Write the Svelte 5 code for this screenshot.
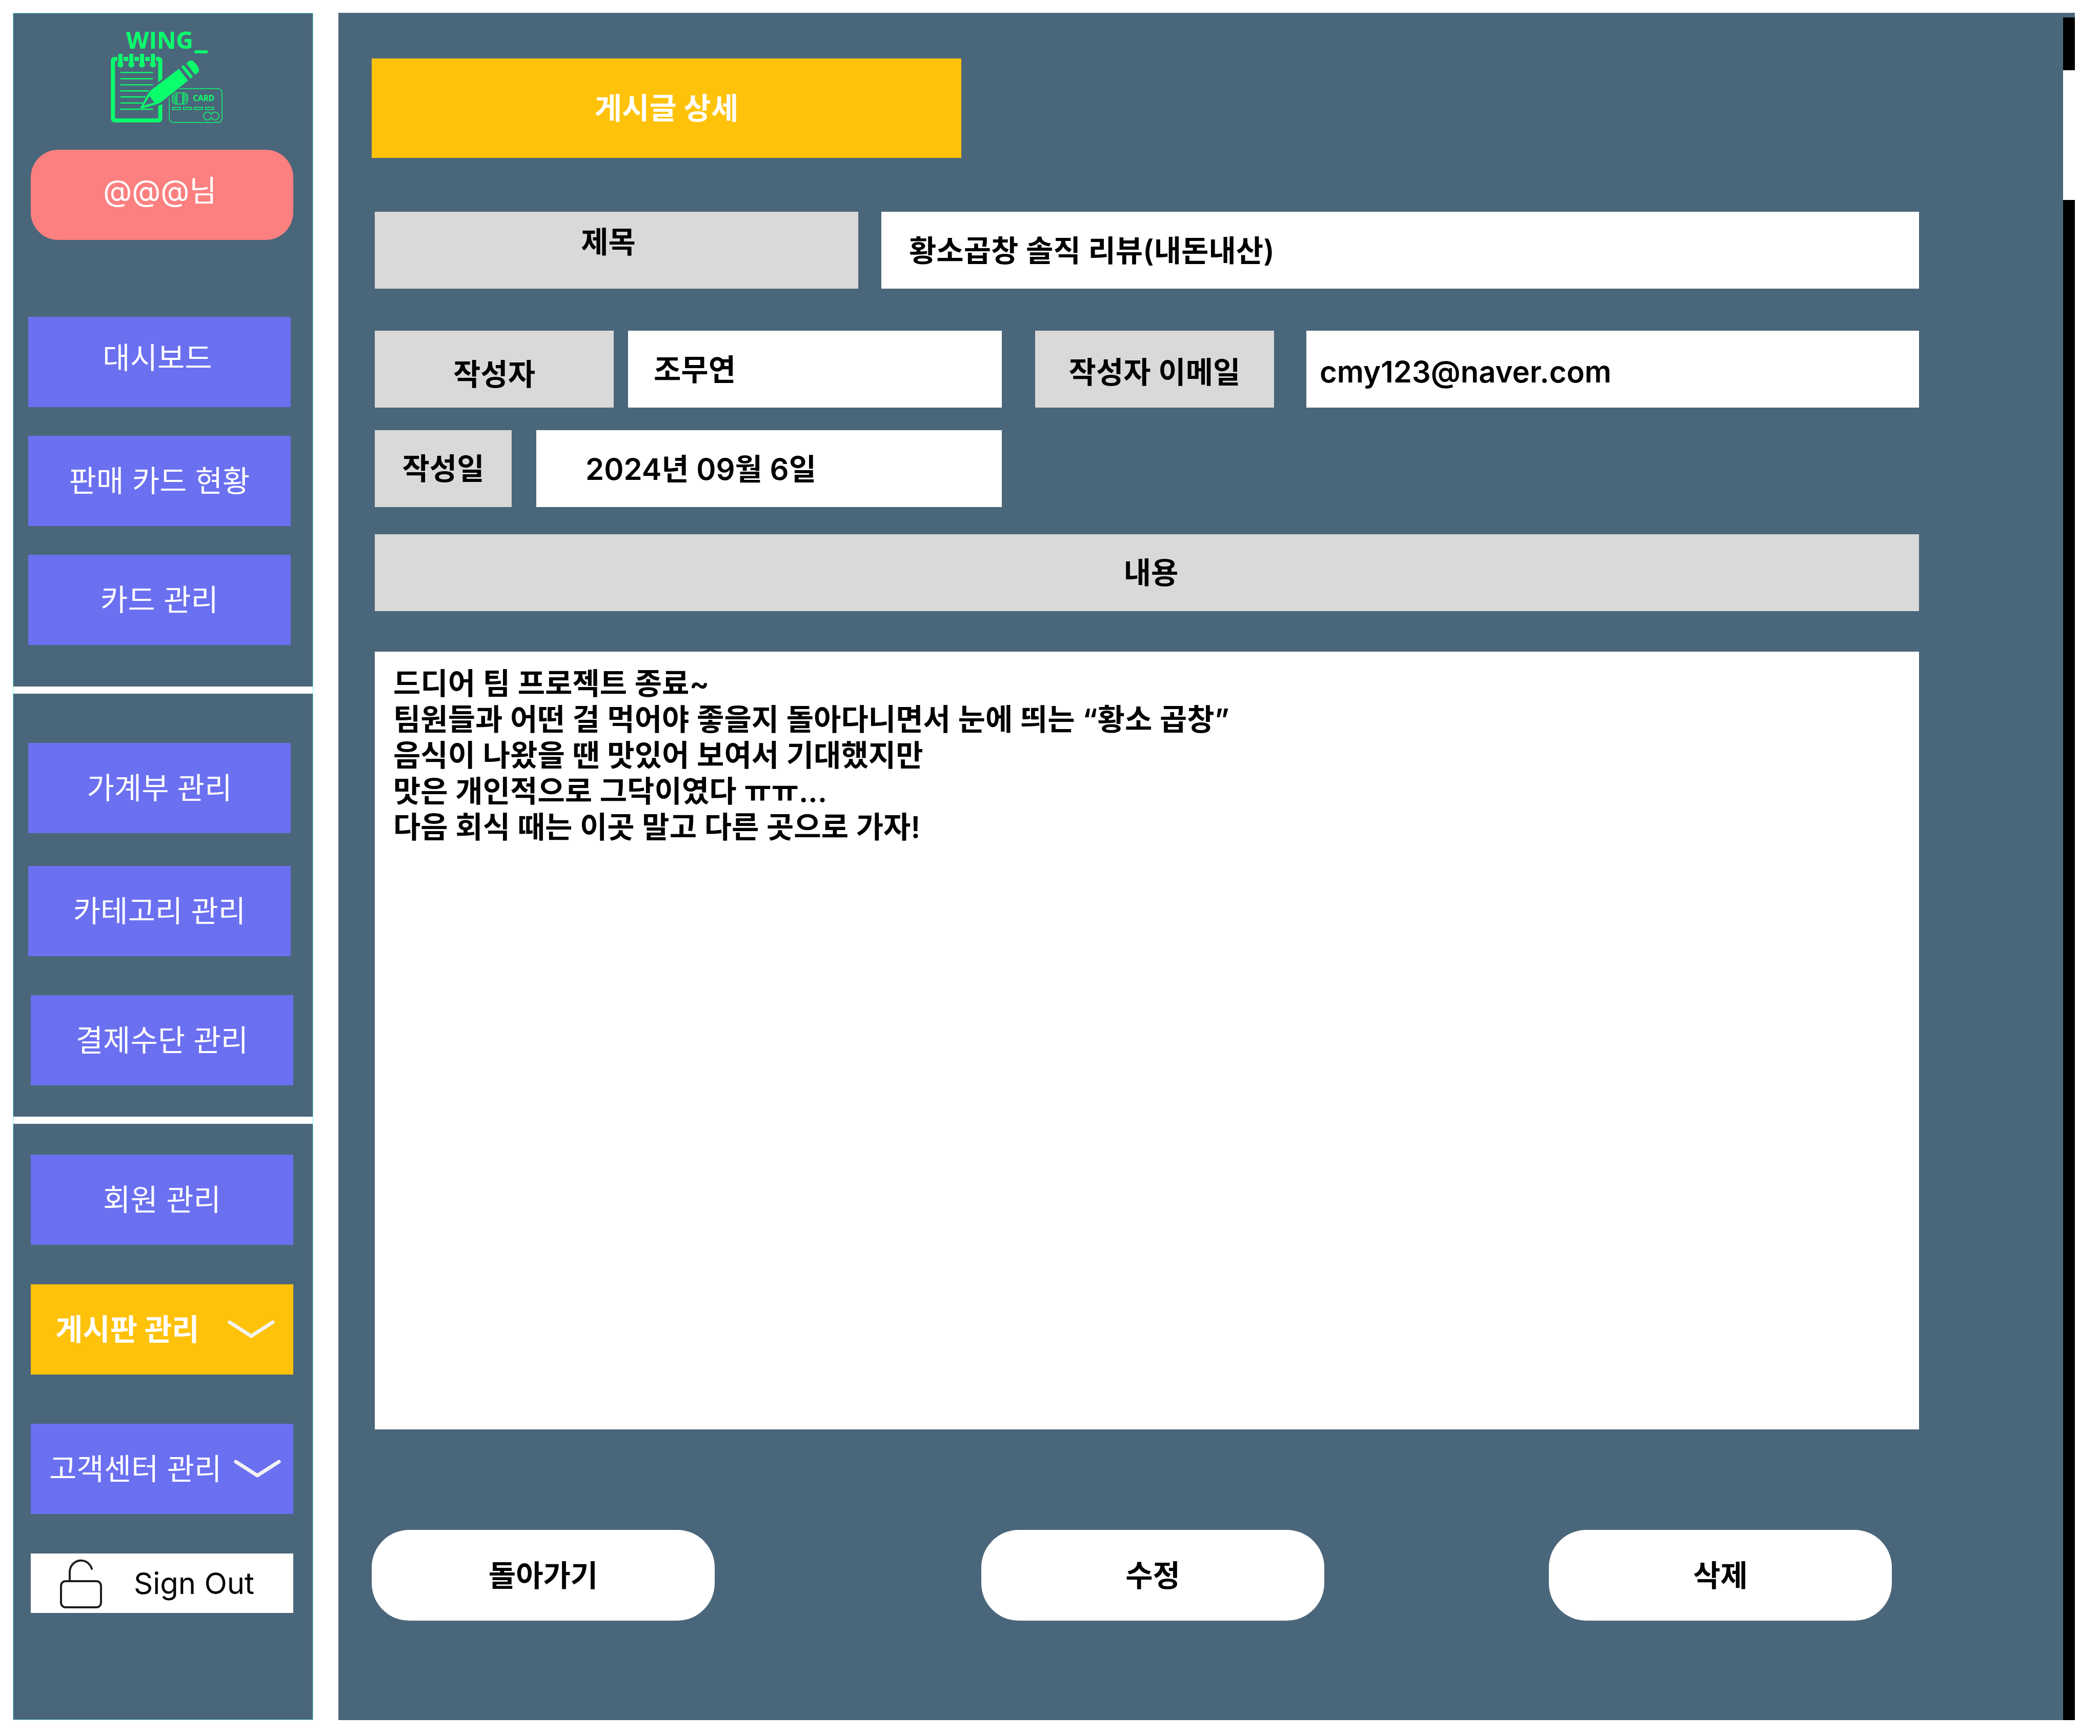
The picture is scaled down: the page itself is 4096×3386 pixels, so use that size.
<script>
  const post = {
    title: '황소곱창 솔직 리뷰(내돈내산)',
    author: '조무연',
    email: 'cmy123@naver.com',
    date: '2024년 09월 6일',
    body: [
      '드디어 팀 프로젝트 종료~',
      '팀원들과 어떤 걸 먹어야 좋을지 돌아다니면서 눈에 띄는 “황소 곱창”',
      '음식이 나왔을 땐 맛있어 보여서 기대했지만',
      '맛은 개인적으로 그닥이였다 ㅠㅠ...',
      '다음 회식 때는 이곳 말고 다른 곳으로 가자!'
    ].join('\n')
  };
  const noteLines = [315, 355, 394, 433, 472, 511, 551];
  const rings = [145, 215, 284, 354];
  const dashes = [479, 550, 621, 692];
</script>

{#snippet chevron()}
  <svg class="chevron" viewBox="0 0 92 36" aria-hidden="true">
    <path d="M4 4 46 31 88 4" />
  </svg>
{/snippet}

<div class="page">
  <aside class="sidebar">
    <section class="group first">
      <svg class="logo" viewBox="80 50 724 590" role="img" aria-label="WING_ CARD">
        <text class="wing" x="182" y="162">WING</text>
        <text class="cursor" x="625" y="158">_</text>
        <rect class="pad" x="97" y="228" width="304" height="395" rx="10" />
        {#each rings as x}
          <rect class="gap" x={x - 20} y="205" width="40" height="50" />
          <rect class="solid" x={x - 13} y="195" width="26" height="65" rx="2" />
          <circle class="solid" cx={x} cy="264" r="19" />
        {/each}
        {#each noteLines as y}
          <path class="rule" d="M144 {y}H354" />
        {/each}
        <rect class="card" x="459" y="418" width="339" height="218" rx="26" />
        <rect class="chip" x="479" y="446" width="98" height="72" rx="22" />
        <path class="chip" d="M508 446V518M545 446V518M479 460H514M479 472H508M479 485H500M479 498H504M552 446V518M552 460H575M552 472H577M552 485H577M552 498H575M500 472V518" />
        <text class="card-name" x="612" y="498">CARD</text>
        {#each dashes as x}
          <rect class="dash" {x} y="539" width="52" height="14" />
        {/each}
        <path class="dash" d="M729 586A25.500 25.500 0 1 0 729 603A25.500 25.500 0 1 0 729 586M729 586V580M729 603V609" />
        <path class="gap" d="M388 377 540 262 600 350 416 516 388 530Z" />
        <path class="gap" d="M268 551 326 432 400 384 520 290 580 366 400 518 372 524Z" />
        <path class="solid" d="M521 291 580 367 404 507Q396 513 386 516L278 548Q272 550 273 543L328 442Q332 435 340 430Z" />
        <path class="gap" d="M332 466 363 508 294 528Z" />
        <path class="solid" d="M536 279 551 267 611 341 596 355Z" />
        <path class="solid" d="M568 257 584 244Q600 232 616 245Q642 270 650 293Q653 306 643 316L626 330Z" />
      </svg>
      <button class="tile profile raised" type="button">@@@님</button>
      <nav class="links">
        <a class="tile raised" href="#dashboard">대시보드</a>
        <a class="tile" href="#card-sales">판매 카드 현황</a>
        <a class="tile" href="#cards">카드 관리</a>
      </nav>
    </section>

    <nav class="group second">
      <a class="tile" href="#ledger">가계부 관리</a>
      <a class="tile" href="#categories">카테고리 관리</a>
      <a class="tile shifted" href="#payments">결제수단 관리</a>
    </nav>

    <nav class="group third">
      <a class="tile" href="#members">회원 관리</a>
      <button class="tile menu active" type="button">게시판 관리 {@render chevron()}</button>
      <button class="tile menu support" type="button">고객센터 관리 {@render chevron()}</button>
      <button class="sign-out" type="button">
        <svg class="lock" viewBox="0 0 82 98" aria-hidden="true">
          <rect x="2" y="45" width="78" height="51" rx="9" />
          <path d="M19 45V26A22 23 0 0 1 62 21" />
        </svg>
        Sign Out
      </button>
    </nav>
  </aside>

  <main class="main">
    <div class="content">
      <h1>게시글 상세</h1>

      <form class="post">
        <div class="field title">
          <label for="title">제목</label>
          <input id="title" readonly value={post.title} />
        </div>
        <div class="columns">
          <div class="field author">
            <label for="author">작성자</label>
            <input id="author" readonly value={post.author} />
          </div>
          <div class="field email">
            <label for="email">작성자 이메일</label>
            <input id="email" type="email" readonly value={post.email} />
          </div>
          <div class="field date">
            <label for="date">작성일</label>
            <input id="date" readonly value={post.date} />
          </div>
        </div>
        <label class="body-label" for="body">내용</label>
        <textarea id="body" readonly value={post.body}></textarea>
      </form>

      <div class="actions">
        <button type="button">돌아가기</button>
        <button type="button">수정</button>
        <button type="button">삭제</button>
      </div>
    </div>
    <div class="scroll-track"><div class="scroll-thumb"></div></div>
  </main>
</div>

<style>
  :global(body) {
    background: #fff;
  }

  .page,
  .page * {
    box-sizing: border-box;
  }

  .page {
    display: flex;
    gap: 49px;
    min-height: 100vh;
    padding: 25px 49px 31px 25px;
    font: 400 58px/70px Inter, 'Noto Sans CJK KR', sans-serif;
    color: #000;
  }

  button,
  input,
  textarea {
    margin: 0;
    border: 0;
    border-radius: 0;
    font: inherit;
    color: inherit;
  }

  a {
    text-decoration: none;
  }

  /* Sidebar */
  .sidebar {
    display: flex;
    flex: none;
    flex-direction: column;
    width: 586px;
    background: #4a667a;
    border: 1px solid #7ff0e0;
  }

  .group {
    display: flex;
    flex-direction: column;
    align-items: flex-start;
    padding: 0 38px 0 29px;
  }

  .first {
    padding-top: 35px;
    padding-bottom: 81px;
  }

  .second {
    padding-top: 96px;
    padding-bottom: 61px;
    gap: 64px;
    border: solid #fff;
    border-width: 14px 0;
  }

  .second .shifted {
    align-self: flex-end;
    margin-top: 12px;
  }

  .third {
    align-items: flex-end;
    padding-top: 60px;
    gap: 77px;
  }

  .logo {
    width: 220px;
    height: 179px;
    margin: 0 0 52px 160px;
    overflow: visible;
  }

  .links {
    display: flex;
    flex-direction: column;
    gap: 56px;
    margin-top: 150px;
  }

  .tile {
    display: flex;
    align-items: center;
    justify-content: center;
    width: 512px;
    height: 176px;
    background: #6b70f0;
    color: #fff;
  }

  .raised {
    padding: 0 8px 16px 0;
  }

  .profile {
    align-self: flex-end;
    border-radius: 54px;
    background: #fc8080;
  }

  .menu {
    justify-content: space-between;
    padding: 0 24px 0 36px;
  }

  .active {
    padding: 0 36px 0 48px;
    background: #ffc20a;
    font-weight: 700;
  }

  .support {
    margin-top: 19px;
  }

  .chevron {
    width: 92px;
    height: 36px;
    fill: none;
    stroke: #f3f3f3;
    stroke-width: 7;
    stroke-linecap: round;
    stroke-linejoin: round;
  }

  .sign-out {
    display: flex;
    align-items: center;
    gap: 62px;
    width: 512px;
    height: 116px;
    padding: 0 0 0 57px;
    background: #fff;
  }

  .lock {
    width: 82px;
    height: 98px;
    fill: none;
    stroke: #1e1e1e;
    stroke-width: 4;
    stroke-linecap: round;
  }

  /* Logo artwork */
  .wing,
  .cursor,
  .card-name {
    font: 700 152px 'Open Sans', sans-serif;
    fill: #0aff6c;
  }

  .cursor {
    font-size: 190px;
    stroke: #0aff6c;
    stroke-width: 6;
  }

  .card-name {
    font-size: 50px;
  }

  .solid {
    fill: #0aff6c;
  }

  .gap {
    fill: #4a667a;
  }

  .pad,
  .rule,
  .card,
  .chip,
  .dash {
    fill: none;
    stroke: #0aff6c;
  }

  .pad {
    stroke-width: 26;
  }

  .rule {
    stroke-width: 8;
  }

  .card,
  .chip,
  .dash {
    stroke-width: 5;
  }

  /* Post detail */
  .main {
    display: flex;
    flex: 1;
    min-width: 0;
    background: #4a667a;
  }

  .content {
    display: flex;
    flex: 1;
    flex-direction: column;
    min-width: 0;
    padding: 89px 281px 194px 65px;
    font-weight: 600;
  }

  h1 {
    display: flex;
    align-items: center;
    justify-content: center;
    width: 1150px;
    height: 194px;
    margin: 0;
    background: #ffc20a;
    color: #fff;
    font: inherit;
    font-weight: 700;
  }

  .post {
    display: flex;
    flex: 1;
    flex-direction: column;
    margin: 105px 0 0;
    padding-left: 6px;
  }

  .field {
    display: flex;
    min-width: 0;
  }

  .columns {
    display: grid;
    grid-template-columns: minmax(0, 1223fr) minmax(0, 1724fr);
    gap: 44px 65px;
    margin: 82px 0 53px;
  }

  label {
    display: flex;
    flex: none;
    align-items: center;
    justify-content: center;
    height: 150px;
    background: #d9d9d9;
  }

  input {
    flex: 1;
    min-width: 0;
    height: 150px;
    padding: 0 0 6px 54px;
    background: #fff;
  }

  .title {
    gap: 45px;
  }

  .title label {
    width: 943px;
    padding: 0 32px 32px 0;
  }

  .author {
    gap: 28px;
  }

  .author label,
  .email label {
    width: 466px;
    padding-top: 20px;
  }

  .author input {
    padding-left: 50px;
  }

  .email {
    gap: 63px;
  }

  .email label {
    padding-top: 12px;
  }

  .email input {
    padding: 10px 0 0 26px;
  }

  .date {
    gap: 48px;
  }

  .date label {
    width: 267px;
  }

  .date input {
    padding-left: 96px;
  }

  .body-label {
    padding-left: 16px;
  }

  textarea {
    flex: 1;
    min-height: 1517px;
    margin-top: 79px;
    padding: 27px 36px;
    background: #fff;
    resize: none;
  }

  .actions {
    display: grid;
    grid-template-columns: 1189fr 1107fr 669fr;
    margin: 196px 53px 0 0;
  }

  .actions button {
    width: 669px;
    height: 177px;
    border-radius: 73px;
    background: #fff;
  }

  .scroll-track {
    flex: none;
    width: 23px;
    margin-top: 9px;
    padding-top: 103px;
    background: #000;
  }

  .scroll-thumb {
    height: 253px;
    background: #fff;
  }
</style>
